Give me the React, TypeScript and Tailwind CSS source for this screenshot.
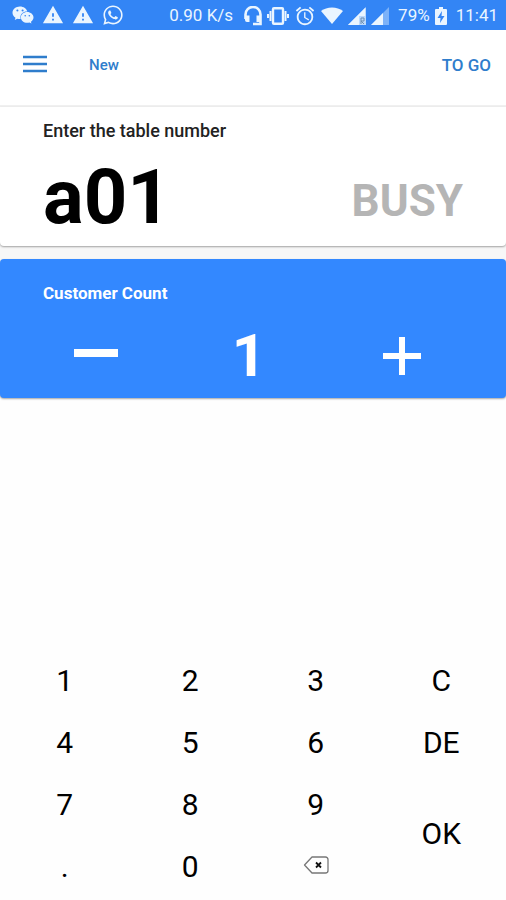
import React, { useState } from 'react';
import { FaWeixin, FaWhatsapp } from 'react-icons/fa';
import { MdAlarm, MdWarning } from 'react-icons/md';

const HeadsetIcon = () => (
  <svg width="18" height="20" viewBox="0 0 18 20" aria-hidden="true">
    <path d="M1.500 13V8.500a7.500 7.500 0 0 1 15 0V18H9" fill="none" stroke="currentColor" strokeWidth="2.600" />
    <path d="M1 9.500h4.500V16H3a2 2 0 0 1-2-2zM12.500 9.500H17V16h-4.500z" fill="currentColor" />
  </svg>
);

const VibrateIcon = () => (
  <svg width="22" height="18" viewBox="0 0 22 18" fill="none" stroke="currentColor" aria-hidden="true">
    <rect x="6" y="1.200" width="10" height="15.600" rx="1" strokeWidth="2.400" />
    <path d="M3.500 4v10M18.500 4v10" strokeWidth="2" />
    <path d="M1 7v4M21 7v4" strokeWidth="2" />
  </svg>
);

const WifiIcon = () => (
  <svg width="22" height="17" viewBox="0 0 22 17" fill="currentColor" aria-hidden="true">
    <path d="M11 17 0 4C3 1.600 6.800 .4 11 .4S19 1.600 22 4z" />
  </svg>
);

const SignalIcon = ({ roaming = false }: { roaming?: boolean }) => (
  <svg width="18" height="18" viewBox="0 0 18 18" fill="currentColor" aria-hidden="true">
    <path d="M0 18 18 0v18z" opacity={roaming ? 0.75 : 0.4} />
    {roaming ? (
      <>
        <path d="M0 18 17 1v8h-6v9z" />
        <path d="M13 17v-6h3v3h-3l3 3" fill="none" stroke="#6f8fb0" />
      </>
    ) : (
      <path d="M0 18 12 6v12z" />
    )}
  </svg>
);

const BatteryIcon = () => (
  <svg width="12" height="18" viewBox="0 0 12 18" aria-hidden="true">
    <path d="M4 0h4v2h3a1 1 0 0 1 1 1v14a1 1 0 0 1-1 1H1a1 1 0 0 1-1-1V3a1 1 0 0 1 1-1h3z" fill="currentColor" />
    <path d="M7 4 2.500 11H5.500L5 16l4.500-7H6.500z" fill="#3385f5" />
  </svg>
);

const BackspaceIcon = () => (
  <svg width="26" height="18" viewBox="0 0 26 18" fill="none" aria-hidden="true">
    <path d="M9 1h13.500A2.500 2.500 0 0 1 25 3.500v11a2.500 2.500 0 0 1-2.500 2.500H9L1.500 9z" stroke="#777" strokeWidth="1.300" strokeLinejoin="round" />
    <path d="m13 6.500 5 5m0-5-5 5" stroke="#111" strokeWidth="1.800" />
  </svg>
);

const StatusBar = () => (
  <div className="flex h-[30px] items-center bg-[#3385f5] pl-3 pr-2 text-[17px] leading-none text-[#eaf5ff]">
    <div className="flex items-center gap-2">
      <FaWeixin size={22} />
      <MdWarning size={22} />
      <MdWarning size={22} />
      <FaWhatsapp size={22} />
    </div>
    <div className="ml-auto flex items-center gap-[5px] pt-px">
      <span className="mr-1.5">0.90 K/s</span>
      <HeadsetIcon />
      <VibrateIcon />
      <MdAlarm size={22} />
      <WifiIcon />
      <SignalIcon roaming />
      <SignalIcon />
      <span className="ml-1">79%</span>
      <BatteryIcon />
      <span className="ml-1">11:41</span>
    </div>
  </div>
);

const keyClass = 'flex items-center justify-center text-3xl';

const App = () => {
  const [table, setTable] = useState('a01');
  const [count, setCount] = useState(1);

  const append = (key: string) => setTable(table + key);
  const remove = () => setTable(table.slice(0, -1));

  return (
    <div className="flex min-h-screen flex-col bg-[#fefefe] font-['Roboto',sans-serif] text-black">
      <StatusBar />

      <header className="flex h-[77px] items-center border-b-2 border-[#f0f0f0] bg-white px-[15px] pb-1 font-medium text-[#2f7dcc]">
        <button type="button" aria-label="Menu" className="ml-2 pb-1">
          <svg width="24" height="18" viewBox="0 0 24 18" stroke="currentColor" strokeWidth="2.500" aria-hidden="true">
            <path d="M0 2h24M0 9h24M0 16h24" />
          </svg>
        </button>
        <a href="#new" className="ml-[42px] text-[15px]">New</a>
        <a href="#togo" className="ml-auto text-[17px]">TO GO</a>
      </header>

      <main className="bg-[#f7f7f7]">
        <section className="h-[139px] rounded-b-sm bg-white px-[43px] pt-3 shadow-[0_1px_2px_rgba(0,0,0,0.35)]">
          <label htmlFor="table" className="block text-lg leading-6 font-medium text-[#222]">
            Enter the table number
          </label>
          <div className="flex items-center">
            <input
              id="table"
              value={table}
              onChange={(e) => setTable(e.target.value)}
              className="h-[100px] w-0 flex-1 bg-transparent pt-2 text-[76px] font-bold outline-none"
            />
            <span className="pt-4 text-[44px] font-bold text-[#b5b5b5]">BUSY</span>
          </div>
        </section>

        <section className="mt-[13px] h-[139px] rounded-sm bg-[#3388ff] pt-[22px] text-white shadow-[0_1px_2px_rgba(0,0,0,0.35)]">
          <h2 className="pl-[43px] text-[17px] leading-6 font-bold">Customer Count</h2>
          <div className="grid h-[102px] grid-cols-3 items-center pl-5 pr-[28px]">
            <button type="button" aria-label="Remove customer" className="flex justify-center" onClick={() => setCount(Math.max(1, count - 1))}>
              <svg width="44" height="44" viewBox="0 0 44 44" fill="currentColor" aria-hidden="true">
                <path d="M0 15h44v8H0z" />
              </svg>
            </button>
            <output className="text-center text-[60px] leading-none font-bold">{count}</output>
            <button type="button" aria-label="Add customer" className="flex justify-center" onClick={() => setCount(count + 1)}>
              <svg width="38" height="38" viewBox="0 0 38 38" stroke="currentColor" strokeWidth="6" aria-hidden="true">
                <path d="M0 19h38M19 0v38" />
              </svg>
            </button>
          </div>
        </section>
      </main>

      <div className="mt-auto grid auto-rows-[62px] grid-cols-4 px-0.5 pb-0.5">
        {['1', '2', '3'].map((key) => (
          <button key={key} type="button" className={keyClass} onClick={() => append(key)}>{key}</button>
        ))}
        <button type="button" className={keyClass} onClick={() => setTable('')}>C</button>
        {['4', '5', '6'].map((key) => (
          <button key={key} type="button" className={keyClass} onClick={() => append(key)}>{key}</button>
        ))}
        <button type="button" className={keyClass}>DE</button>
        {['7', '8', '9'].map((key) => (
          <button key={key} type="button" className={keyClass} onClick={() => append(key)}>{key}</button>
        ))}
        <button type="button" className="row-span-2 flex items-center justify-center pb-1 text-3xl">OK</button>
        {['.', '0'].map((key) => (
          <button key={key} type="button" className={keyClass} onClick={() => append(key)}>{key}</button>
        ))}
        <button type="button" aria-label="Backspace" className="flex items-center justify-center pb-1" onClick={remove}>
          <BackspaceIcon />
        </button>
      </div>
    </div>
  );
};

export default App;
